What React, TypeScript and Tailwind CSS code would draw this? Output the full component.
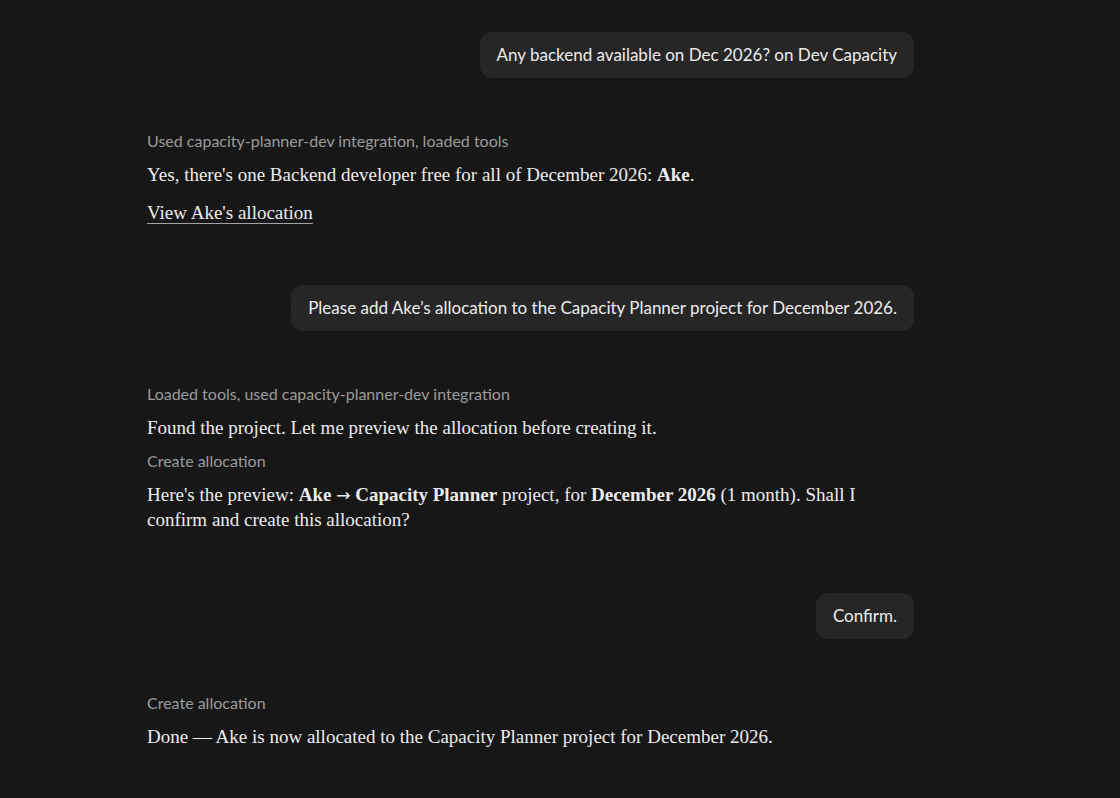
import React from 'react';

const sans = "font-['Lato','Inter',sans-serif]";
const serif = "font-['Liberation_Serif','DejaVu_Serif',serif]";

const UserBubble = ({ children, className = '' }: { children: React.ReactNode; className?: string }) => (
  <div className={`self-end rounded-xl bg-[#262626] px-[17px] py-[11px] text-[17px] leading-6 text-[#ececec] ${sans} ${className}`}>
    {children}
  </div>
);

const Label = ({ children }: { children: React.ReactNode }) => (
  <p className={`text-[16px] leading-[22px] text-[#9b9b9b] ${sans}`}>{children}</p>
);

const Prose = ({ children, className = '' }: { children: React.ReactNode; className?: string }) => (
  <p className={`text-[19px] leading-[25px] text-[#ececec] ${serif} ${className}`}>{children}</p>
);

export default function App() {
  return (
    <div className="min-h-screen bg-[#171717]">
      <div className="flex flex-col pl-[147px] pr-[206px] pt-8 pb-10">
        <UserBubble>Any backend available on Dec 2026? on Dev Capacity</UserBubble>

        <div className="mt-[52px] flex flex-col gap-[10px]">
          <Label>Used capacity-planner-dev integration, loaded tools</Label>
          <Prose>
            Yes, there's one Backend developer free for all of December 2026: <strong className="font-bold">Ake</strong>.
          </Prose>
          <Prose className="mt-[3px]">
            <a href="#" className="underline decoration-[#a3a3a3] decoration-1 underline-offset-4">
              View Ake's allocation
            </a>
          </Prose>
        </div>

        <UserBubble className="mt-[60px]">
          Please add Ake’s allocation to the Capacity Planner project for December 2026.
        </UserBubble>

        <div className="mt-[52px] flex flex-col gap-[10px]">
          <Label>Loaded tools, used capacity-planner-dev integration</Label>
          <Prose>Found the project. Let me preview the allocation before creating it.</Prose>
          <Label>Create allocation</Label>
          <Prose>
            Here's the preview: <strong className="font-bold">Ake</strong>{' '}
            <span className="font-['DejaVu_Sans',sans-serif] text-[17px] leading-none font-normal">→</span>{' '}
            <strong className="font-bold">Capacity Planner</strong> project, for{' '}
            <strong className="font-bold">December 2026</strong> (1 month). Shall I confirm and create this allocation?
          </Prose>
        </div>

        <UserBubble className="mt-[61px]">Confirm.</UserBubble>

        <div className="mt-[53px] flex flex-col gap-[10px]">
          <Label>Create allocation</Label>
          <Prose>Done — Ake is now allocated to the Capacity Planner project for December 2026.</Prose>
        </div>
      </div>
    </div>
  );
}
